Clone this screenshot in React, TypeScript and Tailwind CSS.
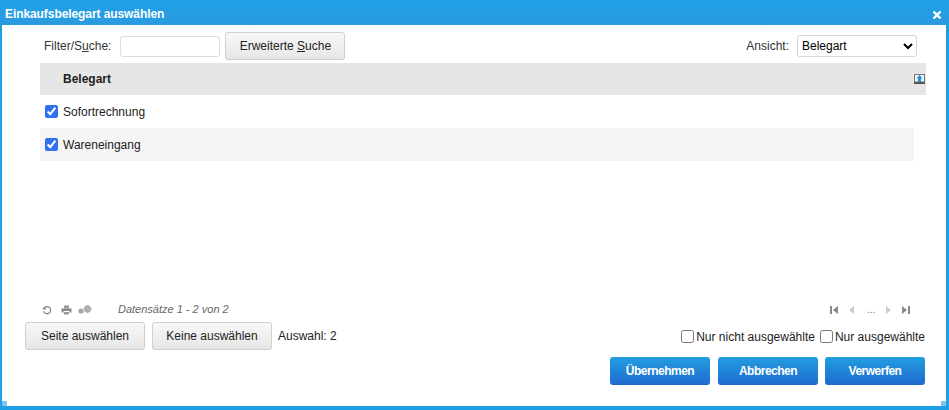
import React from "react";

const GreyButton: React.FC<{ children: React.ReactNode; className?: string }> = ({ children, className }) => (
    <button className={`h-[28px] rounded-[3px] border border-[#cfcfcf] bg-gradient-to-b from-[#f8f8f8] to-[#e6e6e6] text-[12px] text-[#222] ${className ?? ""}`}>
        {children}
    </button>
);

const BlueButton: React.FC<{ label: string; className?: string }> = ({ label, className }) => (
    <button className={`h-[28px] w-[100px] rounded-[3px] bg-gradient-to-b from-[#239fdf] to-[#2169cf] text-[12px] font-bold tracking-[-0.5px] text-white ${className ?? ""}`}>
        {label}
    </button>
);

const CheckedBox = () => (
    <input type="checkbox" defaultChecked className="m-0 h-[13px] w-[13px] accent-[#2f6ff0]" />
);

const Row: React.FC<{ label: string; striped?: boolean }> = ({ label, striped }) => (
    <div className={`mr-[12px] flex h-[33px] items-center gap-[5px] pl-[5px] text-[12px] text-[#222] ${striped ? "bg-[#f5f5f5]" : ""}`}>
        <CheckedBox />
        <span>{label}</span>
    </div>
);

const App: React.FC = () => {
    return (
        <div className="relative flex h-[410px] w-[949px] flex-col overflow-hidden bg-[#1fa0e6] font-['Liberation_Sans',Arial,sans-serif]">
            {/* title bar */}
            <div className="flex h-[25px] shrink-0 items-center justify-between bg-gradient-to-b from-[#1fa0e6] to-[#2a9ae0] pl-[5px] pr-[7px] pt-[3px]">
                <span className="text-[12px] font-bold tracking-[-0.08px] text-white">Einkaufsbelegart auswählen</span>
                <svg width="10" height="10" viewBox="0 0 10 10" className="mt-[2px]">
                    <path d="M1.5 1.5 L8.5 8.5 M8.5 1.5 L1.5 8.5" stroke="#fff" strokeWidth="2.4" />
                </svg>
            </div>

            <div className="ml-[2px] mr-[3px] mb-[4px] flex min-h-0 flex-1 flex-col bg-white">
                {/* filter row */}
                <div className="mt-[7px] flex h-[28px] items-center pl-[42px] pr-[29px] text-[12px] text-[#333]">
                    <span>Filter/S<u>u</u>che:</span>
                    <input className="ml-[9px] h-[21px] w-[100px] rounded-[3px] border border-[#ddd] bg-white" />
                    <GreyButton className="ml-[5px] w-[120px]">Erweiterte <u>S</u>uche</GreyButton>
                    <span className="ml-auto">Ansicht:</span>
                    <select className="ml-[8px] h-[22px] w-[120px] rounded-[3px] border border-[#d5d5d5] bg-white text-[12px] text-black">
                        <option>Belegart</option>
                    </select>
                </div>

                {/* table */}
                <div className="ml-[38px] mr-[20px] mt-[3px] flex-1">
                    <div className="flex h-[32px] items-center justify-between bg-[#e6e6e6] pl-[23px] pr-[1px]">
                        <span className="text-[12px] font-bold text-[#222]">Belegart</span>
                        <svg width="11" height="10" viewBox="0 0 11 10">
                            <rect x="0.5" y="0.5" width="10" height="7.5" fill="#f4f4f4" stroke="#777" />
                            <rect y="8" width="11" height="2" fill="#555" />
                            <path d="M5.5 1 L8.5 4.5 H7 V8 H4 V4.5 H2.5 Z" fill="#1a94e0" />
                        </svg>
                    </div>
                    <Row label="Sofortrechnung" />
                    <Row label="Wareneingang" striped />
                </div>

                {/* pager */}
                <div className="flex h-[14px] items-center pl-[40px] pr-[35px]">
                    <svg width="10" height="10" viewBox="0 0 10 10" fill="none">
                        <path d="M2 3.2 A3.6 3.6 0 1 1 1.6 6.2" stroke="#888" strokeWidth="1.3" />
                        <path d="M0 3.8 L3.6 1.8 V5 Z" fill="#888" />
                    </svg>
                    <svg width="11" height="10" viewBox="0 0 11 10" className="ml-[9px]">
                        <rect x="3" y="0.5" width="5" height="3" fill="#999" />
                        <path d="M0.5 3.5 H10.5 V7.5 H8.5 V6 H2.5 V7.5 H0.5 Z" fill="#888" />
                        <rect x="3" y="7" width="5" height="2.5" fill="#999" />
                    </svg>
                    <svg width="14" height="10" viewBox="0 0 14 10" className="ml-[6px]">
                        <circle cx="3" cy="6" r="2.6" fill="#a5a5a5" />
                        <circle cx="9.5" cy="4" r="3.4" fill="#b0b0b0" stroke="#a0a0a0" strokeDasharray="1.4 1" />
                    </svg>
                    <span className="mb-[2px] ml-[26px] text-[11px] italic text-[#666]">Datensätze 1 - 2 von 2</span>
                    <div className="ml-auto flex items-center">
                        <svg width="10" height="8" viewBox="0 0 10 8">
                            <rect x="1" width="2" height="8" fill="#888" />
                            <path d="M9 0 V8 L4 4 Z" fill="#888" />
                        </svg>
                        <svg width="6" height="8" viewBox="0 0 6 8" className="ml-[10px]">
                            <path d="M5 0 V8 L0 4 Z" fill="#ccc" />
                        </svg>
                        <span className="ml-[12px] w-[7px] text-[10px] leading-[10px] text-[#777]">...</span>
                        <svg width="6" height="8" viewBox="0 0 6 8" className="ml-[11px]">
                            <path d="M1 0 V8 L6 4 Z" fill="#ccc" />
                        </svg>
                        <svg width="10" height="8" viewBox="0 0 10 8" className="ml-[10px]">
                            <path d="M1 0 V8 L6 4 Z" fill="#888" />
                            <rect x="7" width="2" height="8" fill="#888" />
                        </svg>
                    </div>
                </div>

                {/* selection row */}
                <div className="mt-[5px] flex h-[28px] items-center pl-[23px] pr-[21px] text-[12px] text-[#222]">
                    <GreyButton className="w-[120px]">Seite auswählen</GreyButton>
                    <GreyButton className="ml-[7px] w-[120px]">Keine auswählen</GreyButton>
                    <span className="ml-[6px]">Auswahl: 2</span>
                    <label className="ml-auto flex items-center">
                        <input type="checkbox" className="m-0 h-[13px] w-[13px]" />
                        <span className="ml-[2px] pt-[2px]">Nur nicht ausgewählte</span>
                    </label>
                    <label className="ml-[5px] flex items-center">
                        <input type="checkbox" className="m-0 h-[13px] w-[13px]" />
                        <span className="ml-[2px] pt-[2px]">Nur ausgewählte</span>
                    </label>
                </div>

                {/* action buttons */}
                <div className="mb-[21px] mt-[7px] flex justify-end pr-[21px]">
                    <BlueButton label="Übernehmen" />
                    <BlueButton label="Abbrechen" className="ml-[8px]" />
                    <BlueButton label="Verwerfen" className="ml-[7px]" />
                </div>
            </div>

            {/* resize handles */}
            <div className="absolute bottom-[4px] left-[2px] h-[5px] w-[5px] bg-[#7cc6ee]" />
            <div className="absolute bottom-[4px] right-[3px] h-[5px] w-[5px] bg-[#7cc6ee]" />
        </div>
    );
};

export default App;
